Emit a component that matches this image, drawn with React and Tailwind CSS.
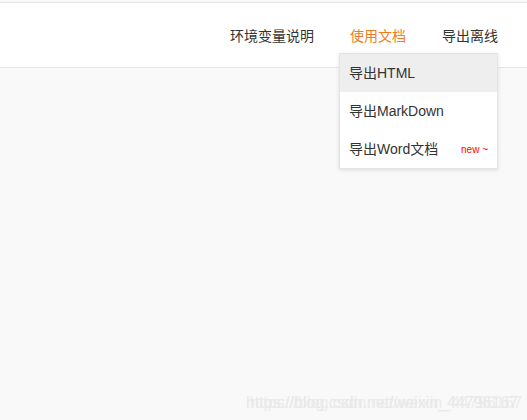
export default function App() {
  const font = { fontFamily: '"Liberation Sans", Arial, "Noto Sans CJK SC", sans-serif' };
  return (
    <div className="relative h-[420px] w-[527px] overflow-hidden bg-[#f9f9f9]" style={font}>
      <div className="h-[2px] bg-[#f9f9f9]" />
      <header className="flex h-[66px] items-center justify-end border-y border-[#e6e6e6] bg-white pr-[29px] text-[14px] text-[#333]">
        <nav className="flex items-center gap-[36px] pt-[2px]">
          <span>环境变量说明</span>
          <span className="text-[#f37b1d]">使用文档</span>
          <span>导出离线</span>
        </nav>
      </header>
      <div className="absolute left-[339px] top-[53px] w-[159px] border border-[#e4e4e4] bg-white text-[14px] text-[#333] shadow-[0_1px_4px_rgba(0,0,0,0.12)]">
        <div className="flex h-[38px] items-center bg-[#eeeeee] pl-[9px]">导出HTML</div>
        <div className="flex h-[38px] items-center pl-[9px]">导出MarkDown</div>
        <div className="flex h-[38px] items-center justify-between pl-[9px] pr-[9px]">
          <span>导出Word文档</span>
          <span className="text-[10px] text-[#ff0000]">new ~</span>
        </div>
      </div>
      <div className="absolute left-[246px] top-[391px] text-[16px] text-[#e8e8e8] [text-shadow:4px_0_0_#ececec]">
        https://blog.csdn.net/weixin_44796167
      </div>
    </div>
  );
}
